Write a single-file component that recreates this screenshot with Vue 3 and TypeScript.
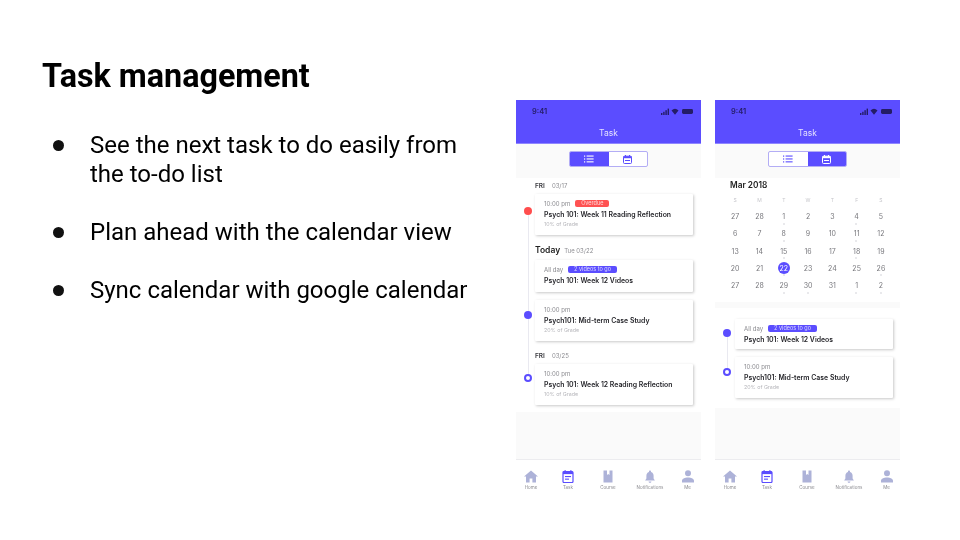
<script setup lang="ts">
interface Task {
  time: string
  badge?: string
  badgeClass?: string
  title: string
  grade?: string
  dot?: string
  date?: [string, string]
  today?: boolean
  spaced?: boolean
}

const bullets = [
  'See the next task to do easily from the to-do list',
  'Plan ahead with the calendar view',
  'Sync calendar with google calendar'
]

const phones = ['list', 'calendar']

const listTasks: Task[] = [
  { date: ['FRI', '03/17'], time: '10:00 pm', badge: 'Overdue', badgeClass: 'red', title: 'Psych 101: Week 11 Reading Reflection', grade: '10% of Grade', dot: 'red' },
  { date: ['Today', 'Tue 03/22'], today: true, time: 'All day', badge: '2 videos to go', badgeClass: 'purple', title: 'Psych 101: Week 12 Videos' },
  { time: '10:00 pm', title: 'Psych101: Mid-term Case Study', grade: '20% of Grade', dot: 'solid' },
  { date: ['FRI', '03/25'], spaced: true, time: '10:00 pm', title: 'Psych 101: Week 12 Reading Reflection', grade: '10% of Grade', dot: 'ring' }
]

const calTasks: Task[] = [
  { time: 'All day', badge: '2 videos to go', badgeClass: 'purple', title: 'Psych 101: Week 12 Videos', dot: 'solid' },
  { time: '10:00 pm', title: 'Psych101: Mid-term Case Study', grade: '20% of Grade', dot: 'ring' }
]

const weekdays = ['S', 'M', 'T', 'W', 'T', 'F', 'S']
const days = [27, 28, 1, 2, 3, 4, 5, 6, 7, 8, 9, 10, 11, 12, 13, 14, 15, 16, 17, 18, 19, 20, 21, 22, 23, 24, 25, 26, 27, 28, 29, 30, 31, 1, 2]
const marked = [2, 5, 9, 12, 16, 19, 23, 27, 30, 31, 33, 34]

const tabs = ['Home', 'Task', 'Course', 'Notifications', 'Me']
</script>

<template>
  <div class="slide">
    <div class="copy">
      <h1>Task management</h1>
      <ul>
        <li v-for="b in bullets" :key="b"><span>{{ b }}</span></li>
      </ul>
    </div>

    <div class="phones">
      <div v-for="p in phones" :key="p" class="phone">
        <header class="top">
          <div class="status">
            <span class="clock">9:41</span>
            <svg width="32" height="7" viewBox="0 0 32 7">
              <rect x="0" y="5" width="1.4" height="2" fill="#241d66" />
              <rect x="2.2" y="3.8" width="1.4" height="3.2" fill="#241d66" />
              <rect x="4.4" y="2.2" width="1.4" height="4.8" fill="#241d66" />
              <rect x="6.6" y="0.6" width="1.4" height="6.4" fill="#241d66" />
              <path d="M10.5 2.4a5.2 5.2 0 0 1 7 0L14 6.8z" fill="#241d66" />
              <rect x="21" y="1" width="11" height="5" rx="1.4" fill="#241d66" />
            </svg>
          </div>
          <div class="head-title">Task</div>
        </header>

        <div class="toggle-band">
          <div class="toggle">
            <div class="seg" :class="{ on: p === 'list' }">
              <svg width="10" height="8" viewBox="0 0 10 8">
                <g fill="currentColor">
                  <rect x="0" y="0.5" width="1.2" height="1.2" />
                  <rect x="0" y="3.4" width="1.2" height="1.2" />
                  <rect x="0" y="6.3" width="1.2" height="1.2" />
                  <rect x="2.6" y="0.5" width="7" height="1.1" />
                  <rect x="2.6" y="3.4" width="7" height="1.1" />
                  <rect x="2.6" y="6.3" width="7" height="1.1" />
                </g>
              </svg>
            </div>
            <div class="seg" :class="{ on: p === 'calendar' }">
              <svg width="9" height="9" viewBox="0 0 9 9">
                <rect x="0.5" y="1.2" width="8" height="7.3" rx="1" fill="none" stroke="currentColor" />
                <rect x="0.5" y="1.2" width="8" height="2" fill="currentColor" />
                <rect x="2" y="0" width="1" height="1.5" fill="currentColor" />
                <rect x="6" y="0" width="1" height="1.5" fill="currentColor" />
                <rect x="2" y="5" width="5" height="1" fill="currentColor" />
              </svg>
            </div>
          </div>
        </div>

        <div v-if="p === 'list'" class="list-body">
          <div class="rail"></div>
          <template v-for="t in listTasks" :key="t.title">
            <div v-if="t.date" class="date-row" :class="{ today: t.today, spaced: t.spaced }">
              <b>{{ t.date[0] }}</b><span>{{ t.date[1] }}</span>
            </div>
            <div class="card" :class="{ short: !t.grade }">
              <span v-if="t.dot" class="dot" :class="t.dot"></span>
              <div class="meta">
                <span>{{ t.time }}</span>
                <em v-if="t.badge" :class="t.badgeClass">{{ t.badge }}</em>
              </div>
              <div class="task-name">{{ t.title }}</div>
              <div v-if="t.grade" class="grade">{{ t.grade }}</div>
            </div>
          </template>
        </div>

        <template v-else>
          <div class="calendar">
            <div class="month">Mar 2018</div>
            <div class="cal-grid">
              <span v-for="(w, i) in weekdays" :key="i" class="wd">{{ w }}</span>
              <span v-for="(d, i) in days" :key="'d' + i" class="day" :class="{ mark: marked.includes(i), sel: i === 23 }">
                <i>{{ d }}</i>
              </span>
            </div>
          </div>
          <div class="thin-band"></div>
          <div class="cal-tasks">
            <div class="rail short-rail"></div>
            <div v-for="t in calTasks" :key="t.title" class="card" :class="{ short: !t.grade }">
              <span class="dot" :class="t.dot"></span>
              <div class="meta">
                <span>{{ t.time }}</span>
                <em v-if="t.badge" :class="t.badgeClass">{{ t.badge }}</em>
              </div>
              <div class="task-name">{{ t.title }}</div>
              <div v-if="t.grade" class="grade">{{ t.grade }}</div>
            </div>
          </div>
        </template>

        <div class="filler"></div>

        <nav class="tabs">
          <div v-for="tab in tabs" :key="tab" class="tab">
            <svg width="14" height="13" viewBox="0 0 14 13" class="tab-icon" :class="{ active: tab === 'Task' }">
              <path v-if="tab === 'Home'" d="M7 0.5L0 6.6h2V12.5h3.6V8.5h2.8v4H12V6.6h2z" fill="currentColor" />
              <g v-else-if="tab === 'Task'">
                <rect x="2" y="1.5" width="10" height="11" rx="1" fill="#fff" stroke="currentColor" stroke-width="1.2" />
                <rect x="2" y="1.5" width="10" height="2.6" fill="currentColor" />
                <rect x="3.6" y="0" width="1" height="2" fill="currentColor" />
                <rect x="9.4" y="0" width="1" height="2" fill="currentColor" />
                <rect x="4" y="6" width="6" height="1.1" fill="currentColor" />
                <rect x="4" y="8.6" width="4" height="1.1" fill="currentColor" />
              </g>
              <path v-else-if="tab === 'Course'" d="M2.5 0.5h3.5v4.5l1.2-1 1.3 1V0.5h3v12h-9z" fill="currentColor" />
              <path v-else-if="tab === 'Notifications'" d="M7 0.5c.6 0 1 .4 1 1v.5c1.8.5 2.6 2 2.6 3.7v2.8l1.3 2H2.1l1.3-2V5.7C3.4 4 4.2 2.5 6 2v-.5c0-.6.4-1 1-1zM5.6 11.4h2.8c0 .8-.6 1.3-1.4 1.3s-1.4-.5-1.4-1.3z" fill="currentColor" />
              <path v-else d="M7 0.3a3 3 0 1 1 0 6 3 3 0 0 1 0-6zM1 12.5v-1.7c0-2 2.8-3.3 6-3.3s6 1.3 6 3.3v1.7z" fill="currentColor" />
            </svg>
            <span>{{ tab }}</span>
          </div>
        </nav>
      </div>
    </div>
  </div>
</template>

<style scoped>
.slide {
  width: 960px;
  height: 540px;
  display: flex;
  overflow: hidden;
  background: #fff;
  color: #000;
  font-family: Roboto, "Liberation Sans", sans-serif;
}

.copy {
  width: 516px;
  flex: none;
  padding: 57px 0 0 42px;
  box-sizing: border-box;
  will-change: transform;
}

h1 {
  margin: 0;
  font-size: 32.3px;
  line-height: 38px;
  font-weight: 700;
}

ul {
  margin: 36px 0 0;
  padding: 0 40px 0 11px;
  font-size: 24px;
  line-height: 29px;
  list-style: none;
}

li {
  display: flex;
  margin-bottom: 29px;
}

li::before {
  content: "";
  flex: none;
  width: 11px;
  height: 11px;
  margin: 9px 26px 0 0;
  border-radius: 50%;
  background: #111;
}

.phones {
  display: flex;
  gap: 14px;
  padding-top: 100px;
}

.phone {
  width: 185px;
  height: 397px;
  display: flex;
  flex-direction: column;
  background: #fff;
  font-family: Inter, "Noto Sans", sans-serif;
  filter: blur(0.45px);
}

.top {
  height: 44px;
  flex: none;
  box-sizing: border-box;
  background: #5b4dff;
  border-bottom: 1px solid #8f86ff;
}

.status {
  display: flex;
  justify-content: space-between;
  align-items: center;
  padding: 7px 8px 0 16px;
  height: 8px;
}

.clock {
  font-size: 7.5px;
  font-weight: 600;
  color: #241d66;
}

.head-title {
  margin-top: 12px;
  text-align: center;
  font-size: 8.5px;
  line-height: 12px;
  color: #e3e0ff;
}

.toggle-band {
  height: 34px;
  flex: none;
  display: flex;
  justify-content: center;
  padding-top: 7px;
  box-sizing: border-box;
  background: #fafafa;
}

.toggle {
  width: 79px;
  height: 16px;
  display: flex;
  box-sizing: border-box;
  border: 1px solid #b3adf5;
  border-radius: 2px;
  background: #fff;
  overflow: hidden;
}

.seg {
  flex: 1;
  display: flex;
  align-items: center;
  justify-content: center;
  color: #5b4dff;
}

.seg.on {
  background: #5b4dff;
  color: #fff;
}

.list-body {
  position: relative;
  flex: none;
  height: 234px;
  padding: 0 8px 0 19px;
  box-sizing: border-box;
}

.rail {
  position: absolute;
  left: 11.5px;
  top: 33px;
  height: 167px;
  width: 1.5px;
  background: #e9e9f0;
}

.date-row {
  display: flex;
  align-items: baseline;
  gap: 7px;
  height: 16px;
  padding-top: 4px;
  box-sizing: border-box;
  font-size: 6px;
  color: #8d8d92;
}

.date-row b {
  font-size: 6.5px;
  font-weight: 600;
  color: #3b3b40;
}

.date-row.today {
  gap: 4px;
  height: 25px;
  padding-top: 10px;
}

.date-row.today b {
  font-size: 8.5px;
  color: #222;
}

.date-row.spaced {
  height: 23px;
  padding-top: 11px;
}

.card {
  position: relative;
  height: 41px;
  box-sizing: border-box;
  padding: 5px 6px 0 9px;
  background: #fff;
  border-radius: 1px;
  box-shadow: 1px 1px 3px rgba(0, 0, 0, 0.22);
}

.card.short {
  height: 32px;
  margin-bottom: 8px;
}

.meta {
  display: flex;
  align-items: center;
  gap: 5px;
  height: 9px;
  font-size: 6px;
  color: #8a8a8f;
}

.meta em {
  font-style: normal;
  height: 7.5px;
  line-height: 7.5px;
  padding: 0 6px;
  border-radius: 2px;
  font-size: 5.5px;
  color: #fff;
}

.meta em.red {
  background: #ff5252;
  color: #ffd9d9;
}

.meta em.purple {
  background: #5b4dff;
  color: #dcd9ff;
}

.task-name {
  margin-top: 2px;
  font-size: 6.9px;
  line-height: 9px;
  font-weight: 600;
  color: #26262b;
  white-space: nowrap;
}

.grade {
  margin-top: 1.5px;
  font-size: 5.3px;
  line-height: 7px;
  color: #b5b5ba;
}

.dot {
  position: absolute;
  left: -11px;
  top: 13px;
  width: 8px;
  height: 8px;
  box-sizing: border-box;
  border-radius: 50%;
}

.dot.red {
  background: #ff4d4d;
}

.dot.solid {
  background: #5b4dff;
  top: 11px;
}

.dot.ring {
  border: 2px solid #5b4dff;
  background: #fff;
  top: 10px;
}

.calendar {
  flex: none;
  height: 124px;
  padding: 0 7px 0 8px;
  box-sizing: border-box;
}

.month {
  margin-left: 7px;
  font-size: 8.3px;
  line-height: 14px;
  font-weight: 600;
  color: #222;
}

.cal-grid {
  display: grid;
  grid-template-columns: repeat(7, 24.3px);
  grid-template-rows: 16px repeat(5, 17.3px);
  text-align: center;
}

.wd {
  font-size: 5px;
  line-height: 16px;
  color: #c6c6cb;
}

.day {
  position: relative;
  font-size: 7px;
  line-height: 17px;
  color: #77777c;
}

.day i {
  position: relative;
  z-index: 1;
  font-style: normal;
}

.day.mark::after {
  content: "";
  position: absolute;
  left: 11px;
  top: 14.5px;
  width: 2px;
  height: 2px;
  border-radius: 50%;
  background: #e2e2e6;
}

.day.sel {
  color: #fff;
}

.day.sel::before {
  content: "";
  position: absolute;
  left: 6px;
  top: 2.5px;
  width: 12px;
  height: 12px;
  border-radius: 50%;
  background: #5b4dff;
}

.thin-band {
  flex: none;
  height: 6px;
  background: #fafafa;
}

.cal-tasks {
  position: relative;
  flex: none;
  height: 100px;
  padding: 11px 7px 0 20px;
  box-sizing: border-box;
}

.short-rail {
  left: 11.5px;
  top: 25px;
  height: 39px;
}

.cal-tasks .card.short {
  height: 30px;
}

.cal-tasks .dot {
  top: 10px;
  left: -12.5px;
}

.cal-tasks .card:not(.short) .dot {
  top: 11px;
}

.filler {
  flex: 1;
  background: #fafafa;
}

.tabs {
  flex: none;
  height: 38px;
  box-sizing: border-box;
  display: grid;
  grid-template-columns: 30px 44px 36px 48px 27px;
  padding-top: 10px;
  border-top: 1px solid #ececef;
}

.tab {
  display: flex;
  flex-direction: column;
  align-items: center;
  font-size: 4.5px;
  line-height: 7px;
  color: #8b8b90;
}

.tab span {
  white-space: nowrap;
}

.tab-icon {
  color: #adb2d8;
  margin-bottom: 1px;
}

.tab-icon.active {
  color: #5b4dff;
}
</style>
